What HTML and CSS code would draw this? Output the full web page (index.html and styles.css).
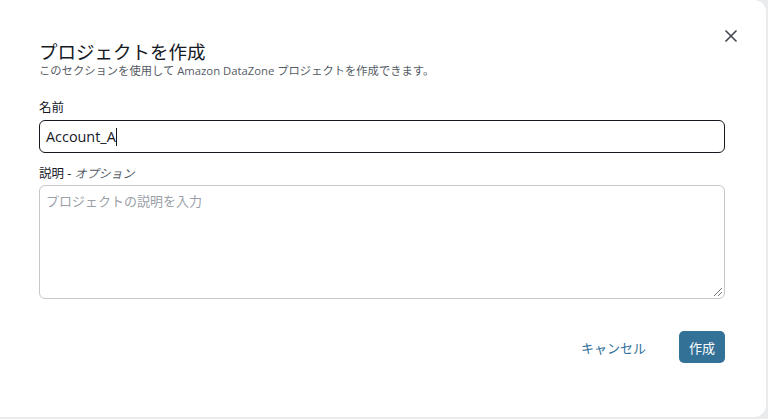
FILE: index.html
```html
<!DOCTYPE html>
<html lang="ja">
<head>
<meta charset="utf-8">
<link rel="stylesheet" href="styles.css">
</head>
<body>
<div class="modal">
  <div class="header">
    <div class="titles">
      <h1 class="title">プロジェクトを作成</h1>
      <p class="subtitle">このセクションを使用して Amazon DataZone プロジェクトを作成できます。</p>
    </div>
    <button class="close" aria-label="閉じる">
      <svg width="14" height="14" viewBox="0 0 14 14"><path d="M1.5 1.5 L12.5 12.5 M12.5 1.5 L1.5 12.5" stroke="#424650" stroke-width="1.6" fill="none"/></svg>
    </button>
  </div>
  <div class="field">
    <label class="label">名前</label>
    <div class="input">Account_A<span class="caret"></span></div>
  </div>
  <div class="field">
    <label class="label">説明 - <i>オプション</i></label>
    <div class="textarea"><span class="placeholder">プロジェクトの説明を入力</span><span class="grip"></span></div>
  </div>
  <div class="footer">
    <button class="btn-link">キャンセル</button>
    <button class="btn-primary">作成</button>
  </div>
</div>
</body>
</html>
```
FILE: styles.css
```css
html, body {
  margin: 0;
  padding: 0;
  background: #e9ebed;
  font-family: "Open Sans", "Noto Sans CJK JP", sans-serif;
}
.modal {
  width: 766px;
  height: 417px;
  box-sizing: border-box;
  background: #ffffff;
  border-radius: 0 12px 12px 0;
  padding: 39px 41px 0 39px;
}
.header {
  display: flex;
  justify-content: space-between;
  align-items: flex-start;
}
.title {
  margin: 0;
  font-size: 18.5px;
  font-weight: 400;
  line-height: 24px;
  color: #16191f;
  font-family: "Noto Sans CJK JP", sans-serif;
}
.subtitle {
  margin: 1px 0 0;
  font-size: 11.3px;
  line-height: 14px;
  color: #545b64;
}
.close {
  border: 0;
  background: none;
  padding: 0;
  margin: -10px -13px 0 0;
  width: 14px;
  height: 14px;
  display: flex;
}
.field {
  margin-top: 21px;
}
.field + .field {
  margin-top: 12px;
}
.label {
  display: block;
  font-size: 12.5px;
  line-height: 18px;
  color: #16191f;
}
.label i {
  color: #545b64;
  font-size: 12px;
}
.input {
  margin-top: 3px;
  height: 33px;
  box-sizing: border-box;
  border: 1px solid #16191f;
  border-radius: 6px;
  padding: 0 6px;
  display: flex;
  align-items: center;
  font-size: 14.4px;
  color: #16191f;
}
.caret {
  display: inline-block;
  width: 1px;
  height: 18px;
  background: #16191f;
  margin-left: 0;
}
.textarea {
  position: relative;
  margin-top: 2px;
  height: 114px;
  box-sizing: border-box;
  border: 1px solid #c6c6cd;
  border-radius: 6px;
  padding: 6px 6px;
  font-size: 13px;
  line-height: 18px;
}
.placeholder {
  color: #9ba0a8;
}
.grip {
  position: absolute;
  right: 2px;
  bottom: 2px;
  width: 8px;
  height: 8px;
  background: linear-gradient(135deg, transparent 45%, #777 45%, #777 55%, transparent 55%, transparent 70%, #777 70%, #777 80%, transparent 80%);
}
.footer {
  margin-top: 32px;
  display: flex;
  justify-content: flex-end;
  align-items: center;
  gap: 33px;
}
.btn-link {
  border: 0;
  background: none;
  padding: 0;
  font-family: "Noto Sans CJK JP", sans-serif;
  font-size: 13px;
  color: #31709a;
}
.btn-primary {
  border: 0;
  background: #337197;
  color: #ffffff;
  border-radius: 5px;
  width: 46px;
  height: 32px;
  font-family: "Noto Sans CJK JP", sans-serif;
  font-size: 13px;
  padding: 0;
}
```
